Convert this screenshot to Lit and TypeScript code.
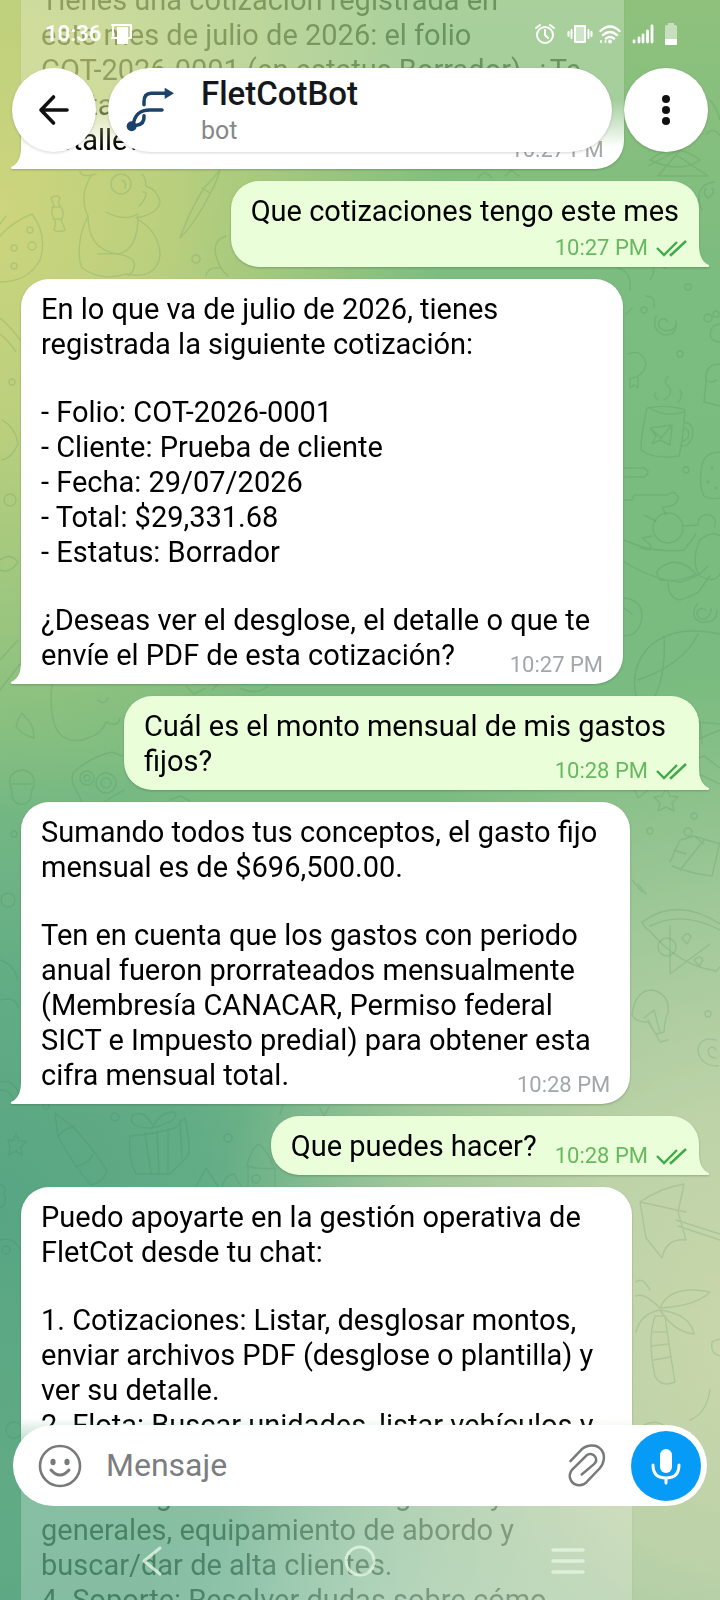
import { LitElement, html, svg, css, nothing } from "lit";
import { customElement, property } from "lit/decorators.js";
import { classMap } from "lit/directives/class-map.js";

type Meta = "below" | "beside" | "overlap";

interface Message {
  mine: boolean;
  meta: Meta;
  time: string;
  paragraphs: string[];
}

const MESSAGES: Message[] = [
  {
    mine: false,
    meta: "overlap",
    time: "10:27 PM",
    paragraphs: [
      "Tienes una cotización registrada en\neste mes de julio de 2026: el folio\nCOT-2026-0001 (en estatus Borrador). ¿Te\ngustaría ver el desglose de montos o ver el\ndetalle?",
    ],
  },
  { mine: true, meta: "below", time: "10:27 PM", paragraphs: ["Que cotizaciones tengo este mes"] },
  {
    mine: false,
    meta: "overlap",
    time: "10:27 PM",
    paragraphs: [
      "En lo que va de julio de 2026, tienes\nregistrada la siguiente cotización:",
      "- Folio: COT-2026-0001\n- Cliente: Prueba de cliente\n- Fecha: 29/07/2026\n- Total: $29,331.68\n- Estatus: Borrador",
      "¿Deseas ver el desglose, el detalle o que te\nenvíe el PDF de esta cotización?",
    ],
  },
  { mine: true, meta: "overlap", time: "10:28 PM", paragraphs: ["Cuál es el monto mensual de mis gastos\nfijos?"] },
  {
    mine: false,
    meta: "overlap",
    time: "10:28 PM",
    paragraphs: [
      "Sumando todos tus conceptos, el gasto fijo\nmensual es de $696,500.00.",
      "Ten en cuenta que los gastos con periodo\nanual fueron prorrateados mensualmente\n(Membresía CANACAR, Permiso federal\nSICT e Impuesto predial) para obtener esta\ncifra mensual total.",
    ],
  },
  { mine: true, meta: "beside", time: "10:28 PM", paragraphs: ["Que puedes hacer?"] },
  {
    mine: false,
    meta: "overlap",
    time: "10:28 PM",
    paragraphs: [
      "Puedo apoyarte en la gestión operativa de\nFletCot desde tu chat:",
      "1. Cotizaciones: Listar, desglosar montos,\nenviar archivos PDF (desglose o plantilla) y\nver su detalle.\n2. Flota: Buscar unidades, listar vehículos y\nconsultar el detalle, estados y documentos.\n3. Catálogos: Consultar los gastos y\ngenerales, equipamiento de abordo y\nbuscar/dar de alta clientes.\n4. Soporte: Resolver dudas sobre cómo\nusar FletCot.",
    ],
  },
];

@customElement("chat-wallpaper")
class ChatWallpaper extends LitElement {
  static styles = css`
    :host {
      display: block;
      background:
        radial-gradient(ellipse 62% 38% at 0% 13%, #cdd57d 0%, #c6d37dd9 35%, #b5cf7d00 100%),
        radial-gradient(ellipse 75% 42% at 104% 84%, #cad7ac 0%, #c4d5abe6 35%, #b4cfa500 100%),
        radial-gradient(ellipse 60% 30% at 0% 76%, #57a583 0%, #5ca984cc 50%, #6fb48400 100%),
        radial-gradient(ellipse 44% 14% at 62% 103%, #93c9ac 0%, #93c9ac00 100%),
        linear-gradient(180deg, #8fc17c 0%, #7bbc80 18%, #79bb80 45%, #83bd8d 75%, #5fa885 100%);
    }
    .doodles {
      display: block;
      width: 100%;
      height: 100%;
      fill: none;
      stroke: #2f7a4c;
      stroke-opacity: 0.16;
      stroke-width: 1.4;
      stroke-linecap: round;
      stroke-linejoin: round;
    }
  `;

  render() {
    return html`<svg class="doodles" viewBox="0 0 720 1600" preserveAspectRatio="xMidYMid slice" aria-hidden="true">
      <!-- panda -->
      <path d="M96 174q-14 4-16 -2M92 174c-10 16-10 30-4 42c-8 16-12 38-6 52q20 14 44 6q30 6 34-18q0-24-24-38q22-4 24-16q-2-12-14-16q0-8-4-12M88 216q0 34 30 38q20-4 20-38M106 212q18 10 32 2M98 254q30-2 36 8q2 8-6 14" />
      <circle cx="121" cy="184" r="10" /><path d="M122 180q5 2 3 8M143 192q5-1 2 6q-2 5-6 8" />
      <!-- candy, egg and brush -->
      <path d="M51 198q6-4 9 0q-3 5 0 8q6 8 1 14q3 6 4 10q-6 3-11 0q2-5 1-10q-6-8-1-14zM52 207h9M53 219h9" />
      <path d="M0 236q12-14 32-22q16 22 8 46q-12 22-40 22M0 224l6-8" />
      <circle cx="14" cy="248" r="3" /><circle cx="32" cy="246" r="4" /><circle cx="14" cy="266" r="3" /><circle cx="30" cy="230" r="3" />
      <path d="M220 170q-8 10-16 18q-14 22-24 50q16-16 30-44q6-10 10-24M202 188l8 5" />
      <circle cx="196" cy="259" r="4" /><path d="M226 236q-14 4-10 20q4 14 12 20M206 276q2-10 14-8" />
      <!-- left margin -->
      <path d="M0 318q12 10 20 22M0 334q10 8 16 18M2 420q14 8 16 24q-6 14-16 16M0 560q10-8 18 2q-8 12-18 8M0 660l18-20M0 690l20-26" />
      <circle cx="10" cy="500" r="6" /><circle cx="12" cy="382" r="3" />
      <path d="M18 720l4-7l4 5q8 6 8 20q-14-4-18-12zM52 684q-4 40 10 52q12 8 26 2q14-4 18-16q12 6 14-4M98 700q6 6 10-2" />
      <path d="M74 772q18-16 38-20l10 4M74 772q-4 6 0 14l8 16M104 802l20-12" /><circle cx="87" cy="778" r="7" /><circle cx="106" cy="783" r="10" /><circle cx="106" cy="783" r="5" /><circle cx="87" cy="778" r="3" />
      <path d="M10 784q-2-12 12-14q14 2 12 16q-4 6-3 12q-4 8-12 6q-8-2-7-12zM12 784h20M170 800l10-4l10 5M212 690l10-10l24 4M240 688q16 8 28-2M186 686l8 8l12-6" />
      <circle cx="14" cy="834" r="3" /><circle cx="8" cy="900" r="7" /><path d="M0 960q14 4 18 20M0 1000q16-4 18 8M0 1082q16-4 20 18M0 1090q12 0 14 12" />
      <!-- right column -->
      <path d="M618 268q14 4 12 22M652 262q4 10-2 18M646 296q10 0 8 12M632 308l-6 6M664 268q16-8 34-4" />
      <circle cx="644" cy="310" r="3" /><circle cx="688" cy="287" r="3" /><circle cx="680" cy="354" r="3" /><circle cx="686" cy="470" r="3" />
      <path d="M668 322q-4-6-9-1q-2 8 7 10q11-1 10-10M656 316q-5 14 8 19q14 0 12-14" />
      <circle cx="708" cy="318" r="4" /><circle cx="716" cy="314" r="3" /><path d="M720 324q-12 2-9 14q4 4 9 4M702 210q-10-24 12-28M706 188q-4 6 2 10q8-4 4-10" />
      <path d="M628 354q14-6 18 10q-2 12-14 14M630 378v10l4-3l4 3v-10" />
      <path d="M647 408q-6 26-6 42q14 10 38 6q4-16 6-46q-18-6-38-2zM650 408q14 10 34 4M684 422q12 2 8 16q-4 10-12 8M684 428q7 2 4 10l-6 4M650 428l22-3l-2 20l-10-5l-8 4l4-8zM650 428l11 10M672 425l-11 13M668 376q-6 6 2 12q2 8-6 12M680 390q4 6-2 12M656 392q-4 4 2 8" />
      <path d="M720 364q-14 0-14 14q0 8-2 24l16 4M706 380q6 4 10 0M720 452q-16 0-18 14q-4 18 2 30q6 4 16 2" />
      <circle cx="712" cy="468" r="1" /><circle cx="708" cy="482" r="1" /><circle cx="716" cy="488" r="1" />
      <path d="M624 468h20q8 4 0 9h-20M624 500h8l2-5h34q6-6 10 2q0 10-16 10l4 8M644 515l12 6" />
      <circle cx="668" cy="528" r="15" /><path d="M684 526l14-1q0-12 12-10q8 4 4 12M652 536l-10 2q12 8 8 12l-10-2M624 540q30 14 60 10l12-16M624 562q30 18 56 20q18-4 28-16M660 568q18-14 36 6q-14 8-36 6q-6-8 0-12zM700 540q-10 22 0 36q14 8 20-2M700 540q12-10 20-4M668 582q0 16 12 18q18-6 20-10l10-14" />
      <path d="M706 610q-5-4-9 2q0 8 8 7q6-3 6-10M697 604q-8 14 4 18q16 2 16-12M624 598q18 2 18 18q-2 20-18 20M624 608l8 6" />
      <path d="M636 696q-6-28 12-48q24-24 72-14M664 636q2 40-10 62M698 634q-14 30-60 46M696 722l24 2M696 740l24-10M700 722l2 22" />
      <path d="M628 774l16-4l4 20l-10 8zM662 796l4-8l4 8l8 1l-6 6l2 8l-8-4l-8 4l2-8l-6-6zM684 764l20-8l16 12M690 770l30 14" />
      <circle cx="694" cy="816" r="3" /><circle cx="650" cy="831" r="3" /><circle cx="688" cy="832" r="4" />
      <path d="M670 862l10-22l14-4l10 8M694 836l26 8M672 866q20 8 40 10l8-34M680 870l24-30M674 850l12 4M632 880l10 12M638 884l8 10" />
      <path d="M642 922q36-26 78 2M642 922q4 8 8 9q28 34 66 40l4-4M650 926q32-16 70 4M670 926v48M670 974l40-30" /><circle cx="667" cy="947" r="9" /><path d="M682 938q6-8 9-1l-4 7zM694 960q6-6 9 0l-4 6z" />
      <path d="M632 1014q4-24 20-24q18 4 16 22q-4 10-4 20l-8 2l-8-12q-14 0-16-8M644 1018l10-8l6 22M648 1020l12 22l8-2" />
      <circle cx="708" cy="1014" r="3" /><path d="M716 1050q-4-6-8 0q0 8 8 8M716 1040q-16-4-18 10q2 16 20 16" />
      <path d="M640 1202q20-14 44-18l-6 28l8 28q-20-2-24 18l-16-20zM640 1202l46 10M676 1220l44 14M678 1226l42 14M650 1290q-8-14-14-8M660 1308q10-24 50-16q-14 14-50 16zM660 1308q-16-16-24-12M660 1310q-20 4-24 22M660 1310q30 4 34 24q-20-2-34-24zM655 1316q-8 24 0 60q6 12 20 6q-6-36-10-66zM654 1332h12M652 1346l16-2M654 1360l16-3" />
      <path d="M712 1342q8-4 8-2M712 1342q-2 12 8 14M636 1430q24-18 36 6M690 1420q16-6 20-30" />
      <!-- pencil, gift, houses and trees -->
      <path d="M55 1113l3 24q22 38 34 48q12-4 15-14q-16-26-34-44zM58 1137q4-8 15-10M77 1166q12-2 16-12M8 1140l5 1l3-8l3 8l8 0l-6 6l1 8l-6-4l-7 4l1-8z" />
      <circle cx="115" cy="1117" r="4" /><circle cx="228" cy="1138" r="4" /><circle cx="46" cy="1106" r="3" />
      <path d="M130 1136q24-2 45-8l10-10q6 30 3 38l-18 18q-20 0-34 0q-8-14-6-38zM145 1133l6 40M157 1131l2 42M168 1129v44M180 1120l2 38M152 1124q-10-16-20-8q-4 12 20 12q8-16 22-16q8 8-22 16M195 1188l11-20l13 20M222 1186q4-12 12-12l8 14M247 1166q4-18 12-22q8 6 14 22M248 1166v20M275 1168v20M247 1166q14 4 28 2" />
      <circle cx="256" cy="1179" r="4" /><path d="M280 1114l4-12M320 1108l4 8l5-9M0 1184q8 4 4 10q4 10-4 14M0 1240q14-4 20 10" /><circle cx="6" cy="1250" r="4" /><circle cx="14" cy="1430" r="8" />
      <!-- top right -->
      <path d="M650 160q24-20 50 0q-20 14-50 0M648 166l34-18l-24 28h50l-30-20M710 100q8 10 10 20M706 134q8-8 14 2M478 178q6-10 14 0M505 176l6-6l8 6" />
    </svg>`;
  }
}

@customElement("chat-message")
class ChatMessage extends LitElement {
  @property({ attribute: false }) message!: Message;

  static styles = css`
    :host {
      display: flex;
      padding: 0 21px;
    }
    :host([mine]) {
      justify-content: flex-end;
    }
    .bubble {
      position: relative;
      display: flex;
      flex-direction: column;
      padding: 13px 20px 11px;
      border-radius: 28px 28px 28px 0;
      background: #fff;
      color: #000;
      filter: drop-shadow(0 1px 1px rgb(40 70 40 / 0.3));
    }
    .mine {
      border-radius: 28px 28px 0 28px;
      background: #eaffd9;
    }
    .beside {
      flex-direction: row;
      align-items: flex-end;
      gap: 18px;
    }
    .text {
      display: flex;
      flex-direction: column;
      gap: 33px;
      font-size: 29px;
      line-height: 35px;
      white-space: pre;
    }
    .overlap .text {
      padding-right: 13px;
    }
    p {
      margin: 0;
    }
    .meta {
      display: flex;
      align-self: flex-end;
      align-items: center;
      gap: 8px;
      margin-bottom: -4px;
      font-size: 22px;
      line-height: 24px;
      color: #a3a7aa;
    }
    .mine .meta {
      margin-right: -8px;
      color: #68b85f;
    }
    .below .meta {
      margin-top: 7px;
    }
    .overlap .meta {
      margin-top: -20px;
    }
    .tail {
      position: absolute;
      bottom: 0;
      left: -11px;
      width: 12px;
      height: 22px;
      fill: #fff;
    }
    .mine .tail {
      left: auto;
      right: -11px;
      fill: #eaffd9;
    }
    .checks {
      width: 31px;
      height: 17px;
      fill: none;
      stroke: #3faa49;
      stroke-width: 2.4;
    }
  `;

  render() {
    const { mine, meta, time, paragraphs } = this.message;
    return html`<div class=${classMap({ bubble: true, mine, [meta]: true })}>
      <div class="text">${paragraphs.map((p) => html`<p>${p}</p>`)}</div>
      <div class="meta">
        <time>${time}</time>
        ${mine
          ? html`<svg class="checks" viewBox="0 0 31 17" role="img" aria-label="Leído">
              <path d="M1 8l7 7L21 2M14 14l1 1L30 1" />
            </svg>`
          : nothing}
      </div>
      <svg class="tail" viewBox="0 0 12 22" aria-hidden="true">
        ${mine
          ? svg`<path d="M0 0H1C1 10 4 17 11 20Q12 21.500 10 22H0Z" />`
          : svg`<path d="M12 0H11C11 10 8 17 1 20Q0 21.500 2 22H12Z" />`}
      </svg>
    </div>`;
  }
}

@customElement("app-root")
class AppRoot extends LitElement {
  static styles = css`
    :host {
      position: relative;
      display: block;
      height: 100vh;
      overflow: hidden;
      font-family: Roboto, "Noto Sans", sans-serif;
    }
    button {
      display: grid;
      place-items: center;
      flex: none;
      padding: 0;
      border: 0;
      background: none;
      color: inherit;
    }
    svg {
      display: block;
      fill: none;
      stroke: currentColor;
      stroke-linecap: round;
      stroke-linejoin: round;
    }
    .solid {
      fill: currentColor;
      stroke: none;
    }
    .wallpaper {
      position: absolute;
      inset: 0;
    }
    .thread {
      position: relative;
      height: 100%;
      overflow: hidden;
      mask-image: linear-gradient(
        180deg,
        rgb(0 0 0 / 0.24) 100px,
        #000 148px,
        #000 calc(100% - 182px),
        rgb(0 0 0 / 0.24) calc(100% - 140px)
      );
    }
    .messages {
      display: flex;
      flex-direction: column;
      gap: 12px;
      margin-top: -30px;
    }
    .top,
    .bottom {
      position: absolute;
      left: 0;
      right: 0;
    }
    .top {
      top: 0;
    }
    .bottom {
      bottom: 0;
    }
    .status {
      display: flex;
      align-items: center;
      height: 68px;
      padding: 0 43px 0 45px;
      box-sizing: border-box;
      color: #fff;
      font-size: 22px;
      font-weight: 600;
      line-height: 24px;
    }
    .status .note {
      margin-left: 10px;
    }
    .indicators {
      display: flex;
      align-items: center;
      gap: 11px;
      margin-left: auto;
    }
    .vibrate {
      margin-right: -5px;
    }
    .bar {
      display: flex;
      gap: 12px;
      padding: 0 12px;
    }
    .round,
    .peer {
      box-sizing: border-box;
      height: 84px;
      border-radius: 42px;
      background: #fff;
      box-shadow: 0 1px 3px rgb(0 0 0 / 0.16);
    }
    .round {
      width: 84px;
      color: #111;
    }
    .peer {
      display: flex;
      flex: 1;
      align-items: center;
      gap: 27px;
      padding: 0 18px;
    }
    .who {
      padding-top: 2px;
    }
    h1 {
      margin: 0;
      color: #15171a;
      font-size: 33px;
      font-weight: 500;
      line-height: 40px;
    }
    .kind {
      margin: 0;
      color: #85888b;
      font-size: 25px;
      line-height: 34px;
    }
    .logo {
      color: #1b426a;
    }
    .composer {
      display: flex;
      align-items: center;
      height: 81px;
      margin: 0 13px;
      padding: 0 6px 0 24px;
      border-radius: 41px;
      background: #fff;
      color: #77797b;
    }
    .field {
      flex: 1;
      min-width: 0;
      padding: 0 0 2px 23px;
      border: 0;
      outline: 0;
      background: none;
      color: #000;
      font: 32px/40px Roboto, "Noto Sans", sans-serif;
    }
    .field::placeholder {
      color: #7b7d7f;
      opacity: 1;
    }
    .attach {
      margin-right: 24px;
    }
    .mic {
      width: 70px;
      height: 70px;
      border-radius: 50%;
      background: #069bf7;
      color: #fff;
    }
    .nav {
      display: grid;
      grid-template-columns: repeat(3, 1fr);
      height: 94px;
      padding: 0 48px;
      color: rgb(226 245 226 / 0.8);
    }
    .nav button {
      padding-top: 16px;
    }
  `;

  render() {
    return html`
      <chat-wallpaper class="wallpaper"></chat-wallpaper>
      <main class="thread">
        <div class="messages">
          ${MESSAGES.map((m) => html`<chat-message .message=${m} ?mine=${m.mine}></chat-message>`)}
        </div>
      </main>

      <header class="top">
        <div class="status">
          <time>10:36</time>
          <svg class="note" width="22" height="22" viewBox="0 0 22 22" stroke-width="2" aria-hidden="true">
            <path class="solid" d="M6 4h11v17H6z" /><path d="M1 2h19v13h-3M2 2v11M1 15h5" />
          </svg>
          <div class="indicators">
            <svg width="22" height="22" viewBox="0 0 22 22" stroke-width="2" aria-hidden="true">
              <circle cx="11" cy="12" r="8" /><path d="M11 7v5l3 3M2 5l4-3M20 5l-4-3" />
            </svg>
            <svg class="vibrate" width="26" height="20" viewBox="0 0 26 20" stroke-width="2" aria-hidden="true">
              <path fill="currentColor" fill-opacity="0.45" d="M8 2h10v16H8z" /><path d="M4.500 6v8M1.500 8v4M21.500 6v8M24.500 8v4" />
            </svg>
            <svg width="22" height="20" viewBox="1 0 22 20" stroke-width="2.400" aria-hidden="true">
              <path d="M2.500 7q9.500-9 19 0M5 11q7-6 14 0M8 14.500q4-3 8 0" /><circle class="solid" cx="12" cy="17.500" r="2" /><path d="M3 17v1M7.500 17v1" stroke-width="2" />
            </svg>
            <svg width="22" height="20" viewBox="3 0 22 20" stroke-width="2.800" aria-hidden="true">
              <path d="M5 17v1M10 14v4M14 11v7M18.500 7v11M23 2v16" />
            </svg>
            <svg width="12" height="24" viewBox="4 0 12 24" aria-hidden="true">
              <path class="solid" fill-opacity="0.5" d="M7 1h6v2h2q1 0 1 2v12H4V5q0-2 1-2h2z" /><path class="solid" d="M4 17h12v5q0 1-1 1H5q-1 0-1-1z" />
            </svg>
          </div>
        </div>
        <div class="bar">
          <button class="round" type="button" aria-label="Atrás">
            <svg width="32" height="32" viewBox="0 0 32 32" stroke-width="3.600"><path d="M29 16H3M15.500 3L3 16l12.500 13" /></svg>
          </button>
          <div class="peer">
            <svg class="logo" width="48" height="46" viewBox="0 0 144 138" stroke-width="10.500" aria-hidden="true">
              <path d="M54 53V44Q54 19 76 19H118M108 69H72C40 69 26 84 22 112M54 86Q56 112 32 115" />
              <path class="solid" d="M116 2L144 19L116 36Z" /><circle class="solid" cx="17" cy="118" r="15" />
            </svg>
            <div class="who">
              <h1>FletCotBot</h1>
              <p class="kind">bot</p>
            </div>
          </div>
          <button class="round" type="button" aria-label="Más opciones">
            <svg width="10" height="32" viewBox="0 0 10 32">
              <circle class="solid" cx="5" cy="5" r="4" /><circle class="solid" cx="5" cy="16" r="4" /><circle class="solid" cx="5" cy="27" r="4" />
            </svg>
          </button>
        </div>
      </header>

      <footer class="bottom">
        <form class="composer">
          <button type="button" aria-label="Emoji">
            <svg width="46" height="46" viewBox="0 0 46 46" stroke-width="2.600">
              <circle cx="23" cy="23" r="20" /><path stroke-width="3" d="M14 27q9 10 18 0" />
              <ellipse class="solid" cx="16" cy="19" rx="2.600" ry="3.200" /><ellipse class="solid" cx="30" cy="19" rx="2.600" ry="3.200" />
            </svg>
          </button>
          <input class="field" type="text" placeholder="Mensaje" aria-label="Mensaje" />
          <button class="attach" type="button" aria-label="Adjuntar">
            <svg width="40" height="45" viewBox="0 0 120 136" stroke-width="7.500">
              <path d="M10 55L44 19C62 3 90 3 104 21C116 38 112 62 98 77L60 117C46 133 22 130 12 114C4 102 8 88 16 80L58 38C66 30 80 32 85 42C90 50 87 58 82 63L44 95" />
            </svg>
          </button>
          <button class="mic" type="button" aria-label="Grabar mensaje de voz">
            <svg width="32" height="38" viewBox="0 0 32 38" stroke-width="3">
              <rect class="solid" x="10" y="2" width="12" height="24" rx="6" />
              <path d="M3 18Q3 31 16 31Q29 31 29 18M16 31v5" />
            </svg>
          </button>
        </form>
        <nav class="nav" aria-label="Navegación">
          <button type="button" aria-label="Volver">
            <svg width="20" height="30" viewBox="0 0 20 30" stroke-width="3"><path d="M18 2L2 15L18 28" /></svg>
          </button>
          <button type="button" aria-label="Inicio">
            <svg width="34" height="34" viewBox="0 0 34 34" stroke-width="3"><circle cx="17" cy="17" r="14" /></svg>
          </button>
          <button type="button" aria-label="Recientes">
            <svg width="34" height="28" viewBox="0 0 34 28" stroke-width="3.500"><path d="M2 3H32M2 14H32M2 25H32" /></svg>
          </button>
        </nav>
      </footer>
    `;
  }
}
